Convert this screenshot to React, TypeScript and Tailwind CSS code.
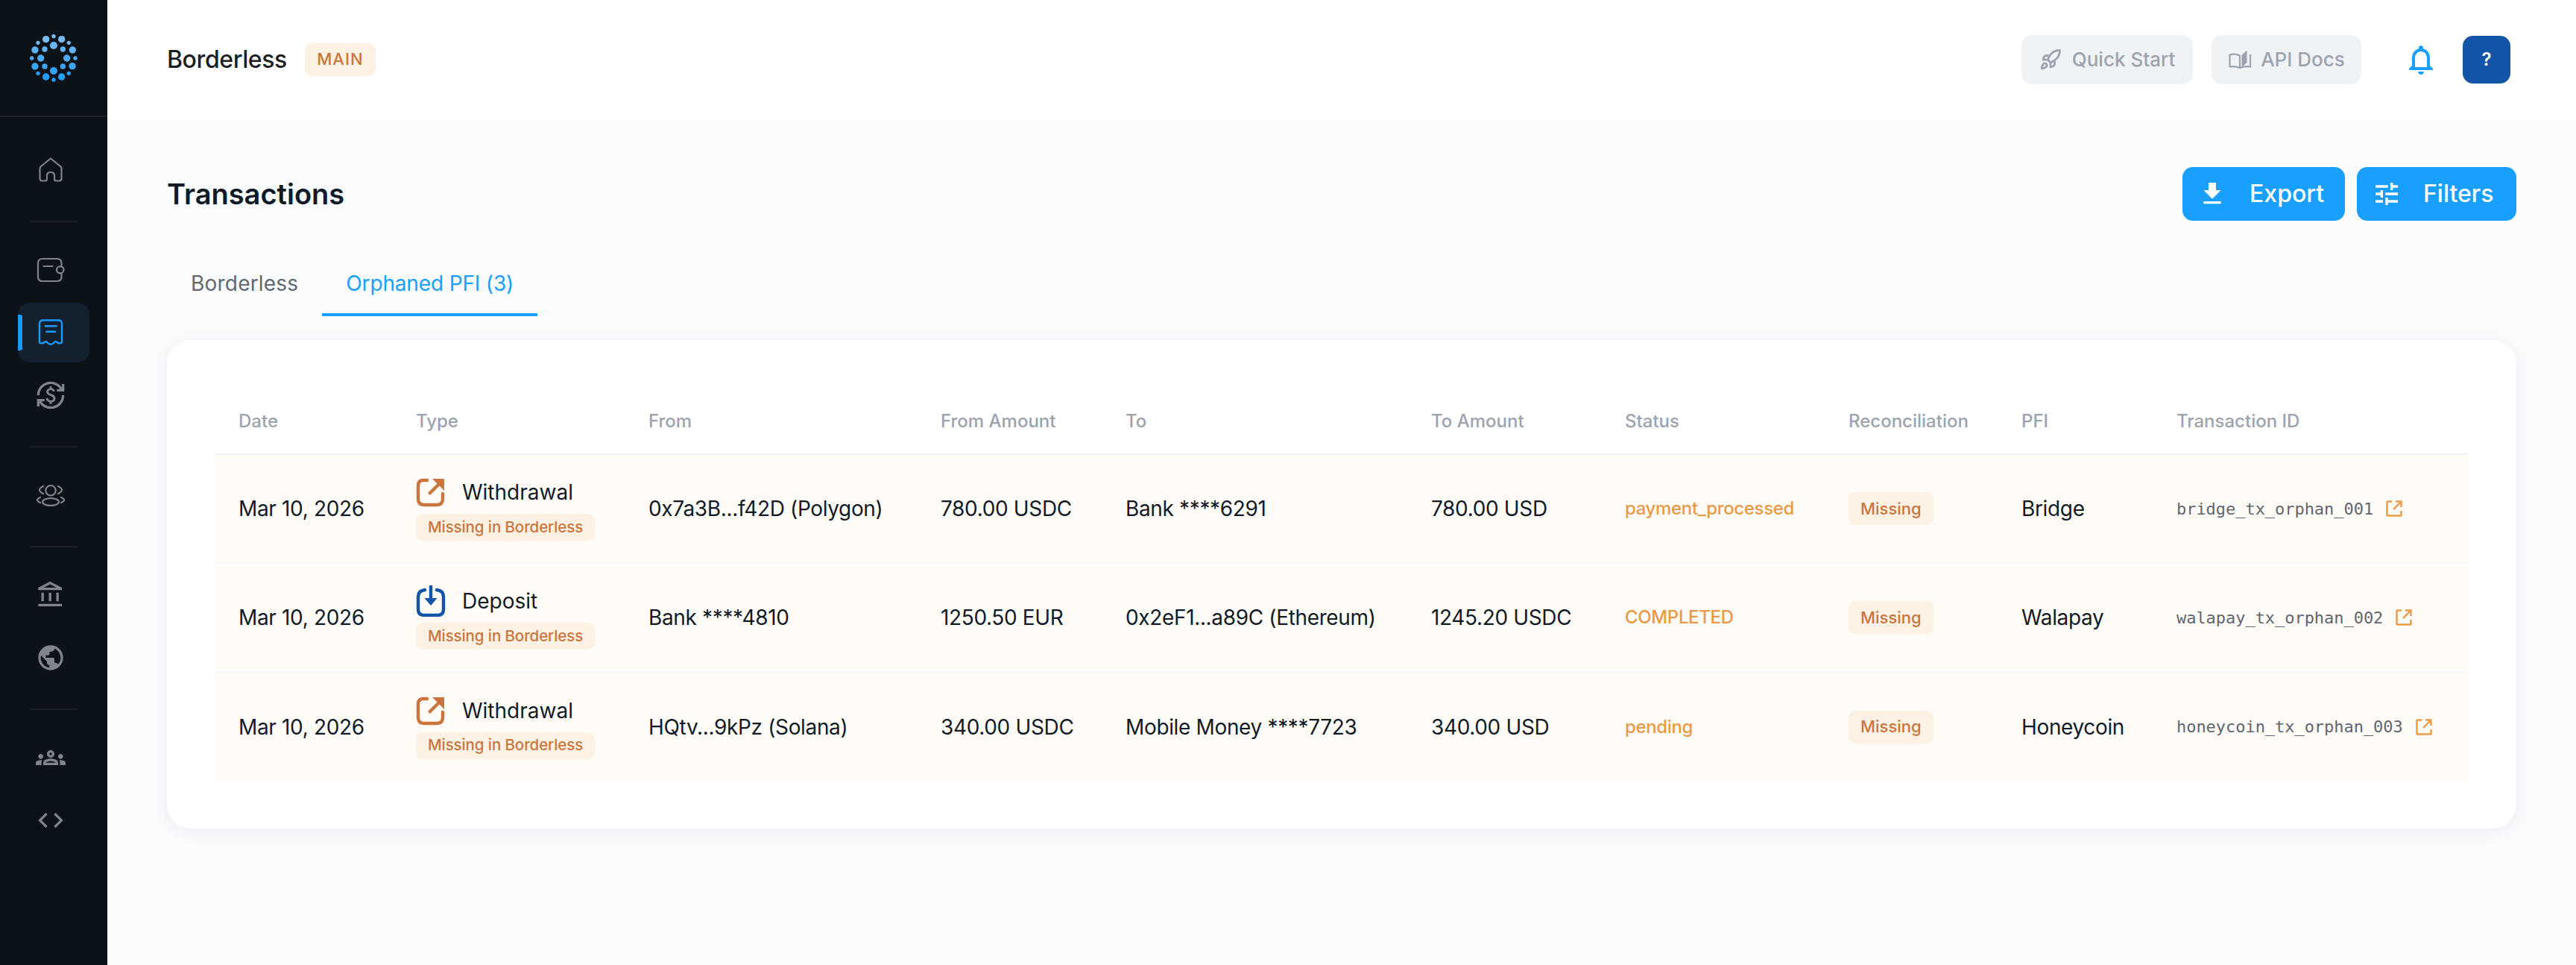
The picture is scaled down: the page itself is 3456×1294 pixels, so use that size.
import type { ReactNode } from "react";

const sans = "font-['Inter',sans-serif]";

const logoDots = [
  [185, 158, 14], [248, 158, 14], [141, 201, 14], [292, 201, 14], [141, 267, 14], [291, 266, 14], [185, 309, 14], [248, 309, 14],
  [216, 146, 8], [153, 172, 8], [277, 172, 8], [128, 234, 8], [303, 234, 8], [153, 295, 8], [277, 295, 8], [216, 321, 8],
  [216, 183, 15], [180, 198, 11], [253, 198, 11], [164, 234, 14], [269, 234, 14], [180, 267, 11], [253, 267, 11], [216, 285, 15],
];

const Logo = () => (
  <svg width="72" height="72" viewBox="108 126 216 216">
    {logoDots.map(([cx, cy, r], i) => {
      // dots fade from pale blue at the top to full blue at the bottom
      const t = (cy - 146) / 175;
      const c = `rgb(${Math.round(125 - t * 94)},${Math.round(188 - t * 33)},${Math.round(238 + t * 17)})`;
      return <circle key={i} cx={cx} cy={cy} r={r} fill={c} />;
    })}
  </svg>
);

const Mui = ({ d, size = 40, className }: { d: string; size?: number; className?: string }) => (
  <svg width={size} height={size} viewBox="0 0 24 24" fill="currentColor" className={className}>
    <path d={d} />
  </svg>
);

const HomeIcon = () => (
  <svg width="40" height="40" viewBox="0 0 40 40" fill="none" stroke="currentColor" strokeWidth="2.2" strokeLinejoin="round" strokeLinecap="round">
    <path d="M20 4.5 L33 15 Q34.5 16.3 34.5 18 V31.5 Q34.5 34.5 31.5 34.5 H27.5 Q25 34.5 25 32 V27 Q25 23 20 23 Q15 23 15 27 V32 Q15 34.5 12.5 34.5 H8.5 Q5.5 34.5 5.5 31.5 V18 Q5.5 16.3 7 15 Z" />
  </svg>
);

const WalletIcon = () => (
  <svg width="40" height="40" viewBox="0 0 40 40" fill="none" stroke="currentColor" strokeWidth="2.2" strokeLinecap="round" strokeLinejoin="round">
    <path d="M34.5 15 V11 Q34.5 5 28.5 5 H9 Q3 5 3 11 V29 Q3 35 9 35 H28.5 Q34.5 35 34.5 29 V24.5" />
    <rect x="28" y="15.3" width="9.5" height="9" rx="4.5" />
    <path d="M10.5 15 H22.5" />
  </svg>
);

const ReceiptIcon = () => (
  <svg width="40" height="40" viewBox="0 0 40 40" fill="none" stroke="currentColor" strokeWidth="2.4" strokeLinecap="round" strokeLinejoin="round">
    <path d="M5 33.5 V8 Q5 3.5 9.5 3.5 H30.5 Q35 3.5 35 8 V33.5 Q31.5 35.5 28.5 33 Q26.5 31 25 33 Q20 38.5 15 33 Q13.5 31 11.5 33 Q8.5 35.5 5 33.5 Z" />
    <path d="M12.7 11.3 H27.7 M14.3 18.7 H26" />
  </svg>
);

const UsersIcon = () => (
  <svg width="40" height="40" viewBox="0 0 40 40" fill="none" stroke="currentColor" strokeWidth="2.2" strokeLinecap="round" strokeLinejoin="round">
    <circle cx="20" cy="13.7" r="6.7" />
    <ellipse cx="20" cy="29" rx="11" ry="4.8" />
    <path d="M10 8 Q0 13 10 18 M30 8 Q40 13 30 18 M6 23 Q-2 26.5 6 30 M34 23 Q42 26.5 34 30" />
  </svg>
);

const RocketIcon = () => (
  <svg width="30" height="30" viewBox="0 0 24 24" fill="none" stroke="currentColor" strokeWidth="2.2" strokeLinecap="round" strokeLinejoin="round">
    <path d="M4.5 16.5c-1.5 1.26-2 5-2 5s3.74-.5 5-2c.71-.84.7-2.13-.09-2.91a2.18 2.18 0 0 0-2.91-.09z" />
    <path d="m12 15-3-3a22 22 0 0 1 2-3.95A12.88 12.88 0 0 1 22 2c0 2.72-.78 7.5-6 11a22.35 22.35 0 0 1-4 2z" />
    <path d="M9 12H4s.55-3.03 2-4c1.62-1.08 5 0 5 0" />
    <path d="M12 15v5s3.03-.55 4-2c1.08-1.62 0-5 0-5" />
  </svg>
);

const BookIcon = () => (
  <svg width="32" height="32" viewBox="0 0 32 32">
    <path d="M16 27 Q10 24.5 2.5 25.5 V9.5 Q10 7.5 16 10.5 V27 Q22 24.5 30 25.5 V9" fill="none" stroke="currentColor" strokeWidth="2.2" strokeLinejoin="round" />
    <path d="M18.5 10 L25.5 3.5 V20 L18.5 26 Z" fill="currentColor" />
  </svg>
);

const OutIcon = () => (
  <svg width="40" height="40" viewBox="0 0 40 40" fill="none" stroke="#c9753d" strokeWidth="4.4" className="shrink-0">
    <path d="M15 4 H10 Q3 4 3 11 V29 Q3 37 11 37 H28 Q36 37 36 29 V22" strokeLinecap="round" />
    <path d="M19 21 L32 8" strokeLinecap="square" />
    <path d="M22 2 H38 V18 Z" fill="#c9753d" stroke="none" />
  </svg>
);

const InIcon = () => (
  <svg width="40" height="42" viewBox="0 0 40 42" fill="none" stroke="#1254a8" strokeWidth="4.4" className="shrink-0">
    <path d="M12 6 Q3 7 3 15 V32 Q3 40 11 40 H29 Q37 40 37 32 V15 Q37 7 28 6" strokeLinecap="round" />
    <path d="M20 1 V20" strokeLinecap="round" />
    <path d="M11.5 17 H28.5 L20 27 Z" fill="#1254a8" stroke="none" />
  </svg>
);

const ExtIcon = () => (
  <svg width="24" height="24" viewBox="0 0 24 24" fill="none" stroke="#ea9a45" strokeWidth="2.4" className="shrink-0">
    <path d="M9 2.5 H3.5 Q2.5 2.5 2.5 3.5 V20.5 Q2.5 21.5 3.5 21.5 H20.5 Q21.5 21.5 21.5 20.5 V15" strokeLinejoin="round" />
    <path d="M11 13 L20 4 M14 2.5 H21.5 V10" />
  </svg>
);

const NavItem = ({ children, active }: { children: ReactNode; active?: boolean }) => (
  <div className={`relative mx-[24px] flex h-[80px] w-[96px] items-center justify-center rounded-[16px] pr-[8px] ${active ? "bg-[#13202e] text-[#1a9bfb]" : "text-[#7f858b]"}`}>
    {active && <span className="absolute left-0 top-[16px] h-[48px] w-[6px] rounded-r-[3px] bg-[#1a9bfb]" />}
    {children}
  </div>
);

const NavDivider = () => <div className="mx-[40px] mb-[24px] mt-[28px] h-[2px] w-[64px] bg-[#1b2127]" />;

const Sidebar = () => (
  <aside className="flex w-[144px] shrink-0 flex-col bg-[#0b1218]">
    <div className="box-content flex h-[155px] items-center justify-center border-b-2 border-[#1b2127]">
      <Logo />
    </div>
    <div className="flex flex-col pt-[31px]">
      <NavItem><HomeIcon /></NavItem>
      <NavDivider />
      <div className="flex flex-col gap-[4px]">
        <NavItem><WalletIcon /></NavItem>
        <NavItem active><ReceiptIcon /></NavItem>
        <NavItem><Mui d="M12.89 11.1c-1.78-.59-2.64-.96-2.64-1.9 0-1.02 1.11-1.39 1.81-1.39 1.31 0 1.79.99 1.9 1.34l1.58-.67c-.15-.44-.82-1.91-2.66-2.23V5h-1.75v1.26c-2.6.56-2.62 2.85-2.62 2.96 0 2.27 2.25 2.91 3.35 3.31 1.58.56 2.28 1.07 2.28 2.03 0 1.13-1.05 1.61-1.98 1.61-1.82 0-2.34-1.87-2.4-2.09l-1.66.67c.63 2.19 2.28 2.78 3.02 2.96V19h1.75v-1.24c.52-.09 3.02-.59 3.02-3.22.01-1.39-.6-2.61-2.96-3.44M3 21H1v-6h6v2H4.52c1.61 2.41 4.36 4 7.48 4 4.97 0 9-4.03 9-9h2c0 6.08-4.92 11-11 11-3.72 0-7.01-1.85-9-4.67zm-2-9C1 5.92 5.92 1 12 1c3.72 0 7.01 1.85 9 4.67V3h2v6h-6V7h2.48C17.87 4.59 15.12 3 12 3c-4.97 0-9 4.03-9 9z" /></NavItem>
      </div>
      <NavDivider />
      <NavItem><UsersIcon /></NavItem>
      <NavDivider />
      <div className="flex flex-col gap-[4px]">
        <NavItem><Mui d="M6.5 10h-2v7h2zm6 0h-2v7h2zm8.5 9H2v2h19zm-2.5-9h-2v7h2zm-7-6.74L16.71 6H6.29zm0-2.26L2 6v2h19V6z" /></NavItem>
        <NavItem><Mui d="M12 2C6.48 2 2 6.48 2 12s4.48 10 10 10 10-4.48 10-10S17.52 2 12 2M4 12c0-.61.08-1.21.21-1.78L8.99 15v1c0 1.1.9 2 2 2v1.93C7.06 19.43 4 16.07 4 12m13.89 5.4c-.26-.81-1-1.4-1.9-1.4h-1v-3c0-.55-.45-1-1-1h-6v-2h2c.55 0 1-.45 1-1V7h2c1.1 0 2-.9 2-2v-.41C17.92 5.77 20 8.65 20 12c0 2.08-.81 3.98-2.11 5.4" /></NavItem>
      </div>
      <NavDivider />
      <div className="flex flex-col gap-[4px]">
        <NavItem><Mui d="M4 13c1.1 0 2-.9 2-2s-.9-2-2-2-2 .9-2 2 .9 2 2 2m1.13 1.1c-.37-.06-.74-.1-1.13-.1-.99 0-1.93.21-2.78.58C.48 14.9 0 15.62 0 16.43V18h4.5v-1.61c0-.83.23-1.61.63-2.29M20 13c1.1 0 2-.9 2-2s-.9-2-2-2-2 .9-2 2 .9 2 2 2m4 3.43c0-.81-.48-1.53-1.22-1.85-.85-.37-1.79-.58-2.78-.58-.39 0-.76.04-1.13.1.4.68.63 1.46.63 2.29V18H24zm-7.76-2.78c-1.17-.52-2.61-.9-4.24-.9s-3.07.39-4.24.9C6.68 14.13 6 15.21 6 16.39V18h12v-1.61c0-1.18-.68-2.26-1.76-2.74M8.07 16c.09-.23.13-.39.91-.69.97-.38 1.99-.56 3.02-.56s2.05.18 3.02.56c.77.3.81.46.91.69zM12 8c.55 0 1 .45 1 1s-.45 1-1 1-1-.45-1-1 .45-1 1-1m0-2c-1.66 0-3 1.34-3 3s1.34 3 3 3 3-1.34 3-3-1.34-3-3-3" /></NavItem>
        <NavItem><Mui d="M9.4 16.6 4.8 12l4.6-4.6L8 6l-6 6 6 6zm5.2 0 4.6-4.6-4.6-4.6L16 6l6 6-6 6z" /></NavItem>
      </div>
    </div>
  </aside>
);

const rows = [
  { out: true, type: "Withdrawal", from: "0x7a3B...f42D (Polygon)", fromAmt: "780.00 USDC", to: "Bank ****6291", toAmt: "780.00 USD", status: "payment_processed", pfi: "Bridge", id: "bridge_tx_orphan_001" },
  { out: false, type: "Deposit", from: "Bank ****4810", fromAmt: "1250.50 EUR", to: "0x2eF1...a89C (Ethereum)", toAmt: "1245.20 USDC", status: "COMPLETED", pfi: "Walapay", id: "walapay_tx_orphan_002" },
  { out: true, type: "Withdrawal", from: "HQtv...9kPz (Solana)", fromAmt: "340.00 USDC", to: "Mobile Money ****7723", toAmt: "340.00 USD", status: "pending", pfi: "Honeycoin", id: "honeycoin_tx_orphan_003" },
];

const columns = [
  { label: "Date", w: "w-[238px]" },
  { label: "Type", w: "w-[312px]" },
  { label: "From", w: "w-[392px]" },
  { label: "From Amount", w: "w-[248px]" },
  { label: "To", w: "w-[410px]" },
  { label: "To Amount", w: "w-[260px]" },
  { label: "Status", w: "w-[300px]" },
  { label: "Reconciliation", w: "w-[232px]" },
  { label: "PFI", w: "w-[208px]" },
  { label: "Transaction ID", w: "w-[424px]" },
];

const cell = "px-[32px] text-[28px] tracking-[-0.35px] text-[#111b27] whitespace-nowrap";

export default function App() {
  return (
    <div className={`flex min-h-[1294px] bg-[#fafbfd] ${sans}`}>
      <Sidebar />
      <main className="flex min-w-0 flex-1 flex-col">
        <header className="flex h-[160px] items-center bg-white pb-[1px] pl-[80px] pr-[88px]">
          <span className="text-[32px] font-medium tracking-[-0.4px] text-[#1b1f24]">Borderless</span>
          <span className="ml-[24px] flex h-[44px] w-[95px] items-center justify-center rounded-[10px] bg-[#fdf1e3] text-[22px] font-medium tracking-[1px] text-[#c9753d]">MAIN</span>
          <div className="ml-auto flex items-center">
            <button className="flex h-[66px] w-[230px] items-center justify-center gap-[14px] rounded-[14px] bg-[#f0f3f5] text-[26px] font-medium text-[#9ca3af]">
              <RocketIcon />Quick Start
            </button>
            <button className="ml-[25px] flex h-[66px] w-[201px] items-center justify-center gap-[12px] rounded-[14px] bg-[#f0f3f5] text-[26px] font-medium text-[#9ca3af]">
              <BookIcon />API Docs
            </button>
            <span className="ml-[56px] text-[#1a9fff]">
              <Mui size={48} d="M12 22c1.1 0 2-.9 2-2h-4c0 1.1.9 2 2 2m6-6v-5c0-3.07-1.63-5.64-4.5-6.32V4c0-.83-.67-1.5-1.5-1.5s-1.5.67-1.5 1.5v.68C7.64 5.36 6 7.92 6 11v5l-2 2v1h16v-1zm-2 1H8v-6c0-2.48 1.51-4.5 4-4.5s4 2.02 4 4.5z" />
            </span>
            <button className="ml-[32px] flex h-[64px] w-[64px] items-center justify-center rounded-[14px] bg-[#1254a8] text-[24px] font-semibold text-white">?</button>
          </div>
        </header>

        <div className="flex flex-col px-[80px] pt-[64px]">
          <div className="flex items-center justify-between">
            <h1 className="text-[38px] font-semibold text-[#111b27]">Transactions</h1>
            <div className="flex gap-[16px]">
              <button className="flex h-[72px] w-[218px] items-center gap-[30px] rounded-[14px] bg-[#199fff] pl-[20px] text-[32px] font-medium text-white">
                <Mui d="M5 20h14v-2H5zM19 9h-4V3H9v6H5l7 7z" />Export
              </button>
              <button className="flex h-[72px] w-[214px] items-center gap-[29px] rounded-[14px] bg-[#199fff] pl-[20px] text-[32px] font-medium text-white">
                <Mui d="M3 17v2h6v-2zM3 5v2h10V5zm10 16v-2h8v-2h-8v-2h-2v6zM7 9v2H3v2h4v2h2V9zm14 4v-2H11v2zm-6-4h2V7h4V5h-4V3h-2z" />Filters
              </button>
            </div>
          </div>

          <div className="mt-[55px] flex text-[28px]">
            <div className="flex h-[73px] items-center px-[32px] pb-[16px] tracking-[0.2px] text-[#62686f]">Borderless</div>
            <div className="flex h-[73px] items-center border-b-[4px] border-[#199fff] px-[32px] pb-[12px] tracking-[-0.15px] text-[#199fff]">Orphaned PFI (3)</div>
          </div>

          <div className="mt-[32px] rounded-[32px] bg-white p-[64px] shadow-[0_4px_24px_rgba(20,40,80,0.06)]">
            <table className="w-full table-fixed border-collapse">
              <thead>
                <tr className="h-[89px] border-b-2 border-[#f1f3f5]">
                  {columns.map((c) => (
                    <th key={c.label} className={`${c.w} px-[32px] pt-[2px] text-left text-[24px] font-medium text-[#9ca3af]`}>{c.label}</th>
                  ))}
                </tr>
              </thead>
              <tbody>
                {rows.map((r, i) => (
                  <tr key={i} className="h-[146px] border-b-2 border-[#f6f7fa] bg-[#fffcf8] last:border-b-0">
                    <td className={cell}>Mar 10, 2026</td>
                    <td className="px-[32px]">
                      <div className="flex items-center gap-[22px] text-[28px] text-[#111b27]">
                        {r.out ? <OutIcon /> : <InIcon />}
                        {r.type}
                      </div>
                      <span className="mt-[8px] inline-flex h-[36px] items-center whitespace-nowrap rounded-[10px] bg-[#fdf1e3] px-[16px] text-[20.5px] font-medium tracking-[-0.1px] text-[#c9753d]">Missing in Borderless</span>
                    </td>
                    <td className={cell}>{r.from}</td>
                    <td className={cell}>{r.fromAmt}</td>
                    <td className={cell}>{r.to}</td>
                    <td className={cell}>{r.toAmt}</td>
                    <td className="px-[32px] text-[24px] font-medium tracking-[-0.35px] text-[#ea9a45]">{r.status}</td>
                    <td className="px-[32px]">
                      <span className="inline-flex h-[44px] items-center rounded-[10px] bg-[#fdf1e3] px-[16px] text-[22px] font-medium text-[#c9753d]">Missing</span>
                    </td>
                    <td className={cell}>{r.pfi}</td>
                    <td className="px-[32px]">
                      <div className="flex items-center gap-[16px] font-['DejaVu_Sans_Mono',monospace] text-[22px] tracking-[-0.04px] text-[#5f6670]">
                        {r.id}
                        <ExtIcon />
                      </div>
                    </td>
                  </tr>
                ))}
              </tbody>
            </table>
          </div>
        </div>
      </main>
    </div>
  );
}
